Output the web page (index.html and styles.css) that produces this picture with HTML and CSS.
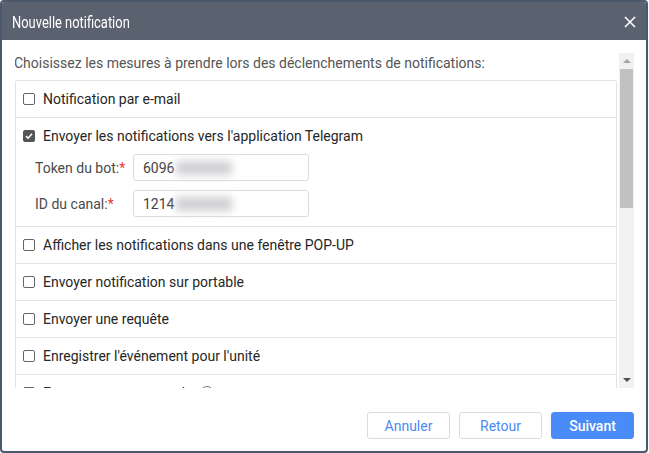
FILE: index.html
```html
<!DOCTYPE html>
<html lang="fr">
<head>
<meta charset="utf-8">
<title>Nouvelle notification</title>
<link rel="stylesheet" href="styles.css">
</head>
<body>
<div class="dialog">
  <div class="header">
    <span class="title">Nouvelle notification</span>
    <svg class="close" width="12" height="12" viewBox="0 0 12 12"><path d="M1 1L11 11M11 1L1 11" stroke="#fff" stroke-width="1.6" fill="none"/></svg>
  </div>
  <div class="body">
    <div class="scroll">
      <div class="content">
        <p class="intro">Choisissez les mesures à prendre lors des déclenchements de notifications:</p>
        <div class="list">
          <div class="row"><span class="cb"></span><span class="label">Notification par e-mail</span></div>
          <div class="row-open">
            <div class="row-head"><span class="cb cb-on"><svg width="8" height="8" viewBox="0 0 8 8"><path d="M1 4.2L3.1 6.2L7 1.8" stroke="#fff" stroke-width="1.6" fill="none"/></svg></span><span class="label">Envoyer les notifications vers l'application Telegram</span></div>
            <div class="field"><span class="flabel">Token du bot:<span class="req">*</span></span><div class="input">6096<span class="blur"></span></div></div>
            <div class="field"><span class="flabel">ID du canal:<span class="req">*</span></span><div class="input">1214<span class="blur"></span></div></div>
          </div>
          <div class="row"><span class="cb"></span><span class="label">Afficher les notifications dans une fenêtre POP-UP</span></div>
          <div class="row"><span class="cb"></span><span class="label">Envoyer notification sur portable</span></div>
          <div class="row"><span class="cb"></span><span class="label">Envoyer une requête</span></div>
          <div class="row"><span class="cb"></span><span class="label">Enregistrer l'événement pour l'unité</span></div>
          <div class="row"><span class="cb"></span><span class="label">Envoyer une commande</span><span class="info">i</span></div>
        </div>
      </div>
      <div class="scrollbar">
        <div class="sb-btn"><span class="tri-up"></span></div>
        <div class="sb-thumb"></div>
        <div class="sb-rest"></div>
        <div class="sb-btn"><span class="tri-down"></span></div>
      </div>
    </div>
  </div>
  <div class="footer">
    <button class="btn">Annuler</button>
    <button class="btn">Retour</button>
    <button class="btn btn-primary">Suivant</button>
  </div>
</div>
</body>
</html>
```
FILE: styles.css
```css
html, body {
  margin: 0;
  padding: 0;
  background: #fff;
}
body {
  font-family: Roboto, "Noto Sans", sans-serif;
  font-size: 14px;
  color: #333;
}
.dialog {
  width: 648px;
  height: 453px;
  box-sizing: border-box;
  border: 2px solid #4c586d;
  border-radius: 4px;
  display: flex;
  flex-direction: column;
  overflow: hidden;
  background: #fff;
}
.header {
  height: 38px;
  flex: none;
  background: #5a616f;
  display: flex;
  align-items: center;
  justify-content: space-between;
  padding: 0 10px 0 10px;
}
.title {
  color: #fff;
  font-size: 17px;
  display: inline-block;
  transform: scaleX(0.76);
  transform-origin: left center;
  margin-top: 1px;
}
.close {
  display: block;
  margin-top: 2px;
}
.body {
  padding: 13px 12px 0 13px;
  flex: none;
}
.scroll {
  height: 335px;
  display: flex;
  overflow: hidden;
}
.content {
  width: 602px;
  flex: none;
}
.intro {
  margin: 0 0 7px -1px;
  line-height: 20px;
  color: #555;
  font-size: 14px;
}
.list {
  border: 1px solid #e3e3e3;
  border-bottom: none;
  border-radius: 3px 3px 0 0;
}
.row, .row-head {
  height: 36px;
  display: flex;
  align-items: center;
  padding-left: 7px;
}
.row {
  border-bottom: 1px solid #e3e3e3;
}
.row-open {
  border-bottom: 1px solid #e3e3e3;
  padding-bottom: 9px;
}
.cb {
  width: 12px;
  height: 12px;
  box-sizing: border-box;
  border: 1px solid #666;
  border-radius: 2px;
  flex: none;
  display: flex;
  align-items: center;
  justify-content: center;
}
.cb-on {
  background: #555;
  border-color: #555;
}
.cb-on svg {
  display: block;
}
.label {
  margin-left: 8px;
  color: #262626;
  line-height: 16px;
}
.field {
  display: flex;
  align-items: center;
  padding-left: 19px;
}
.field + .field {
  margin-top: 9px;
}
.flabel {
  width: 98px;
  color: #4a4a4a;
}
.req {
  color: #e53935;
}
.input {
  width: 176px;
  height: 27px;
  box-sizing: border-box;
  border: 1px solid #dcdcdc;
  border-radius: 3px;
  padding-left: 9px;
  display: flex;
  align-items: center;
  color: #444;
}
.blur {
  display: inline-block;
  width: 56px;
  height: 14px;
  background: #d0d0d4;
  filter: blur(4px);
  margin-left: 2px;
}
.info {
  width: 12px;
  height: 12px;
  border: 1px solid #777;
  border-radius: 50%;
  font-size: 9px;
  line-height: 12px;
  text-align: center;
  color: #777;
  margin-left: 8px;
}
.scrollbar {
  width: 15px;
  margin-left: 2px;
  flex: none;
  background: #f1f1f1;
  display: flex;
  flex-direction: column;
}
.sb-btn {
  height: 16px;
  flex: none;
  display: flex;
  align-items: center;
  justify-content: center;
}
.tri-up {
  width: 0;
  height: 0;
  border-left: 4px solid transparent;
  border-right: 4px solid transparent;
  border-bottom: 4px solid #a3a3a3;
}
.tri-down {
  width: 0;
  height: 0;
  border-left: 4px solid transparent;
  border-right: 4px solid transparent;
  border-top: 4px solid #505050;
}
.sb-thumb {
  height: 139px;
  margin: 0 1px;
  background: #c1c1c1;
  flex: none;
}
.sb-rest {
  flex: 1;
}
.footer {
  flex: 1;
  display: flex;
  justify-content: flex-end;
  align-items: flex-start;
  padding: 24px 12px 0 0;
  gap: 9px;
}
.btn {
  width: 83px;
  height: 27px;
  box-sizing: border-box;
  border: 1px solid #dcdcdc;
  border-radius: 3px;
  background: #fff;
  color: #4a8af4;
  font-family: Roboto, "Noto Sans", sans-serif;
  font-size: 14px;
  padding: 0;
}
.btn-primary {
  background: #4a8cf7;
  border-color: #4a8cf7;
  color: #fff;
  font-weight: 500;
}
```
